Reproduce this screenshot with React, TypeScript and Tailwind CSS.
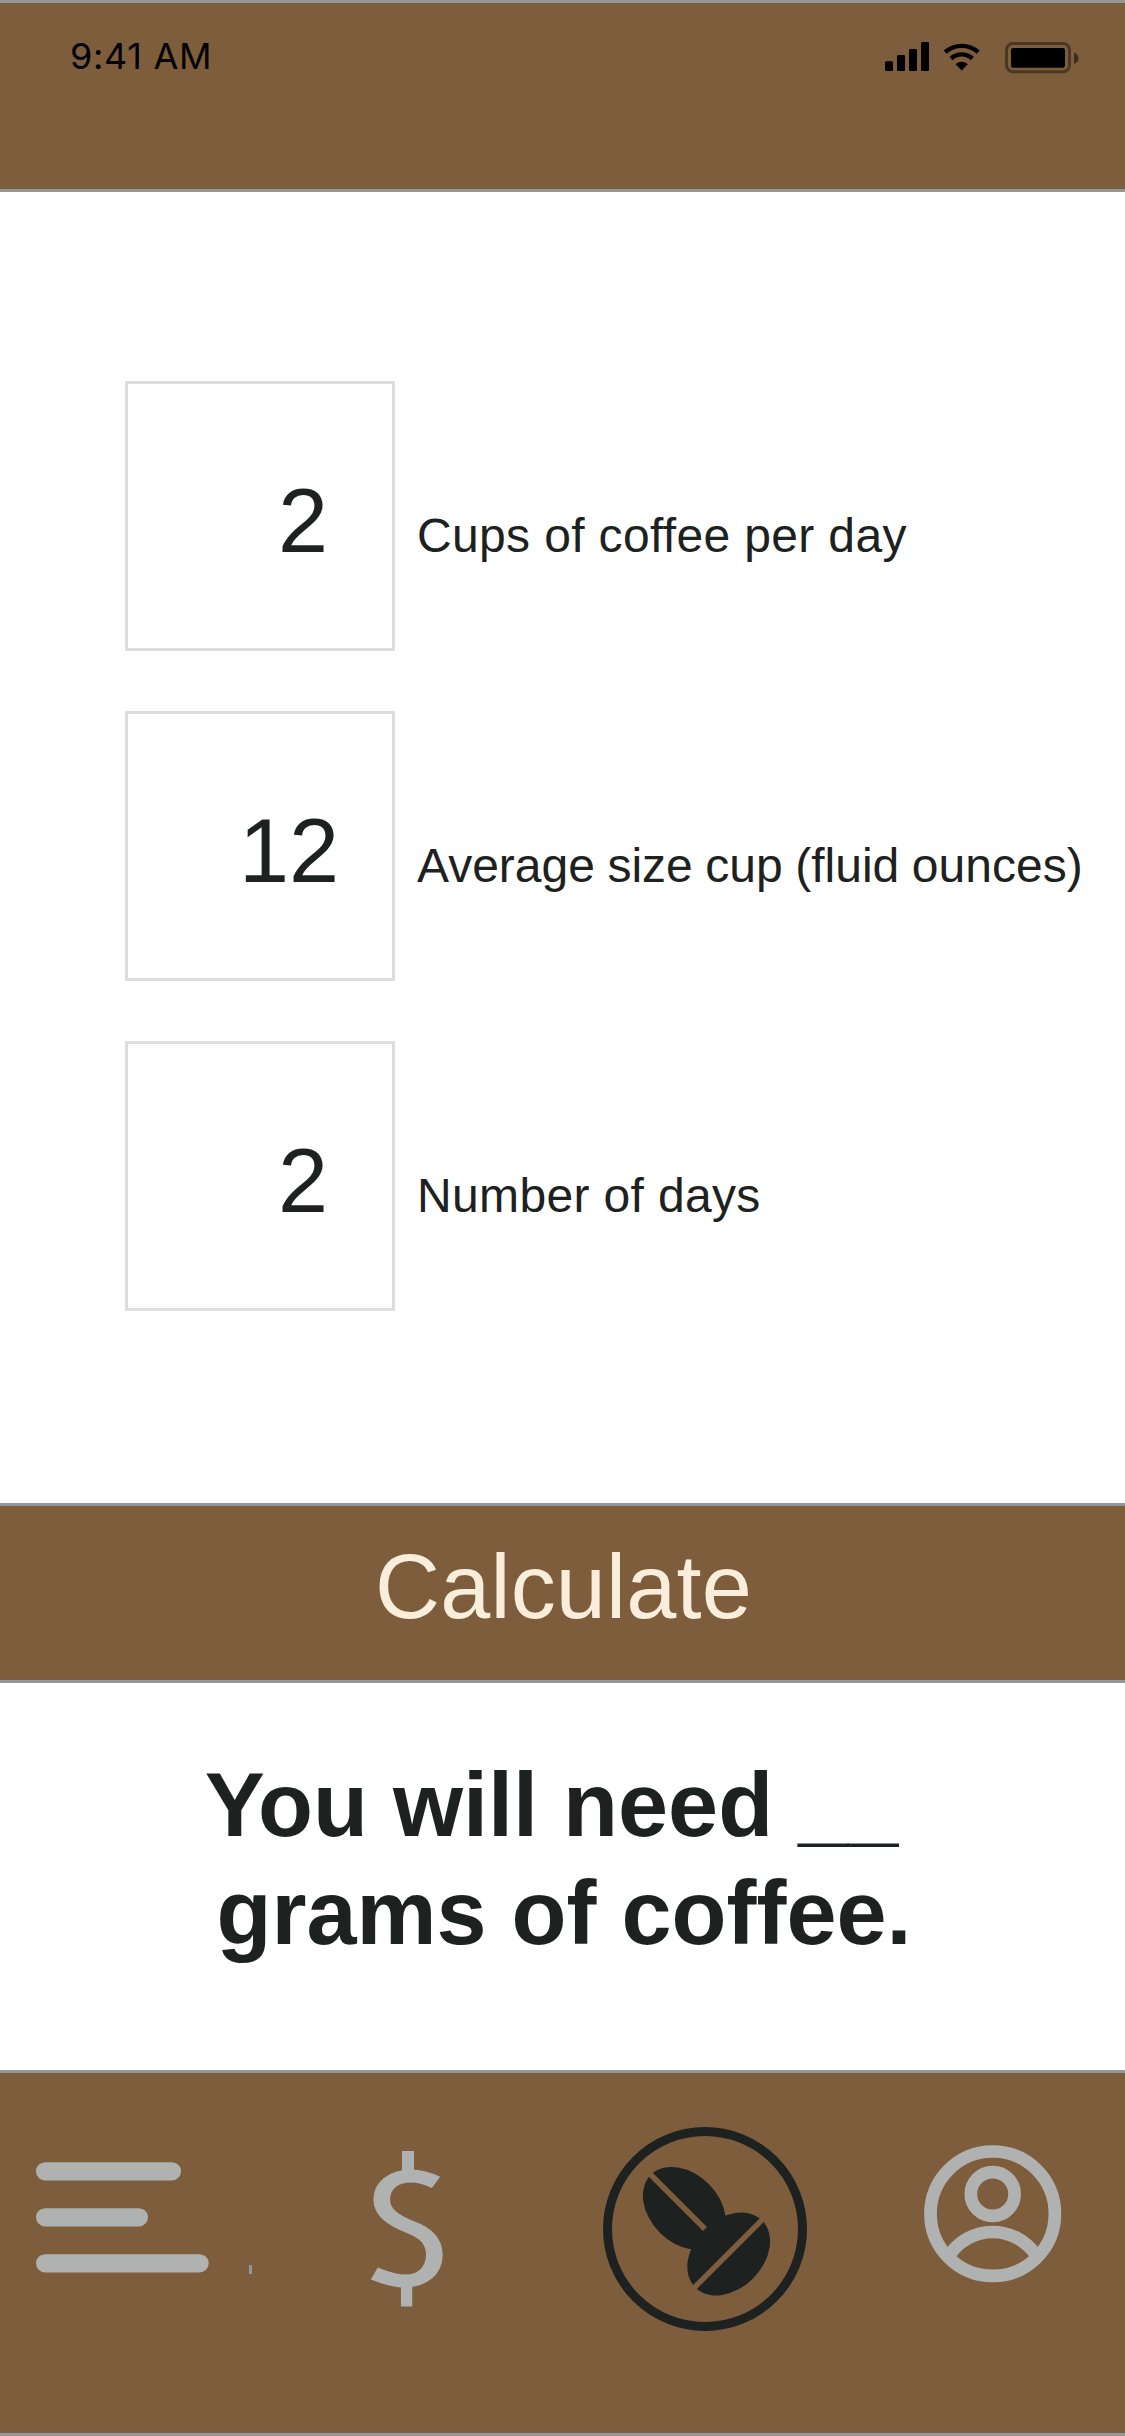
const fields = [
  { id: "cups", value: "2", pad: "pr-[64px]", spacing: "tracking-[0.35px]", label: "Cups of coffee per day" },
  { id: "size", value: "12", pad: "pr-[53px]", spacing: "[word-spacing:-0.8px]", label: "Average size cup (fluid ounces)" },
  { id: "days", value: "2", pad: "pr-[64px]", spacing: "tracking-[0.35px]", label: "Number of days" },
];

function SignalIcon() {
  return (
    <svg className="h-[29px] w-[44px]" viewBox="25 42 44 29">
      <rect x="25" y="61.3" width="8" height="9.7" rx="1.2" />
      <rect x="37" y="55" width="8" height="16" rx="1.2" />
      <rect x="49" y="49" width="8" height="22" rx="1.2" />
      <rect x="61" y="42" width="8" height="29" rx="1.2" />
    </svg>
  );
}

function WifiIcon() {
  return (
    <svg className="ml-[14px] h-[29px] w-[38px]" viewBox="83 42 38 29" fill="none" stroke="#000" strokeWidth="4.4">
      <path d="M85.2 52.2A24.6 24.6 0 0 1 118.2 52.2" />
      <path d="M91.1 58.5A15.8 15.8 0 0 1 112.3 58.5" />
      <path d="M101.7 70.5L95.6 64.2A9 9 0 0 1 107.8 64.2Z" fill="#000" stroke="none" />
    </svg>
  );
}

function BatteryIcon() {
  return (
    <svg className="ml-[24px] h-[32px] w-[74px]" viewBox="145 42 74 32">
      <rect x="146.5" y="43.5" width="63" height="28.3" rx="6.5" fill="none" stroke="#000" strokeOpacity="0.4" strokeWidth="3" />
      <rect x="151" y="48" width="54" height="19.7" rx="2.2" />
      <path d="M214 52.5C220 54.5 220 62 214 64Z" fillOpacity="0.5" />
    </svg>
  );
}

function MenuIcon() {
  return (
    <svg className="mt-[89px] h-[114px] w-[216px]" viewBox="0 0 216 114" fill="#b0b2b1">
      <rect x="0" y="0.2" width="145" height="18.3" rx="9.1" />
      <rect x="0" y="46.2" width="112" height="18.3" rx="9.1" />
      <rect x="0" y="92.2" width="172.7" height="18.3" rx="9.1" />
      <rect x="213" y="103" width="3" height="9" fill="#93969a" />
    </svg>
  );
}

function DollarIcon() {
  return (
    <svg className="ml-[118px] mt-[78px] h-[156px] w-[76px]" viewBox="30 41 76 156" fill="none" stroke="#b0b2b1">
      <path
        transform="scale(1.28 1)"
        strokeWidth="13"
        d="M75 72.3C68 68.3 62 66 55.5 66C41.4 66 32.6 76 32.6 89.5C32.6 103 42.2 110.5 54.7 117C68.8 123.5 73.7 133 73.7 145C73.7 161 64 171 50.8 171C41.5 171 34 166.8 26.8 163.5"
      />
      <path strokeWidth="12" d="M68 41V64" />
      <path strokeWidth="11.3" d="M66.6 172V196.5" />
    </svg>
  );
}

function BeansIcon() {
  return (
    <svg className="ml-[157px] mt-[54px] h-[204px] w-[204px]" viewBox="13 17 204 204">
      <circle cx="115" cy="119" r="97.5" fill="none" stroke="#1d2120" strokeWidth="9" />
      <g fill="#1d2120">
        <ellipse cx="94.3" cy="98.3" rx="47.3" ry="34.5" transform="rotate(45 94.3 98.3)" />
        <ellipse cx="138.7" cy="144" rx="47.3" ry="34.5" transform="rotate(-45 138.7 144)" />
      </g>
      <g stroke="#7e5d3d" strokeWidth="5.4">
        <path d="M58 62L115 119" />
        <path d="M174 108L103 179" />
      </g>
    </svg>
  );
}

function UserIcon() {
  return (
    <svg className="ml-[117px] mt-[72px] h-[138px] w-[138px]" viewBox="24 35 138 138" fill="none" stroke="#b0b2b1" strokeWidth="12.7">
      <circle cx="92.7" cy="103.7" r="62.2" />
      <circle cx="92.7" cy="84" r="21.9" />
      <path d="M50.5 143.6A52 52 0 0 1 134.9 143.6" />
    </svg>
  );
}

export default function App() {
  return (
    <div className="flex h-[2436px] w-[1125px] flex-col overflow-hidden bg-white font-['Liberation_Sans',Arial,sans-serif] text-[#1d2120]">
      <header className="flex h-[192px] shrink-0 items-start border-y-[3px] border-[#939599] bg-[#7e5d3d] pl-[70px]">
        <span className="mt-[31px] w-[815px] font-['Inter',sans-serif] text-[36px] leading-[44px] tracking-[0.7px] text-black">9:41 AM</span>
        <div className="mt-[39px] flex items-start">
          <SignalIcon />
          <WifiIcon />
          <BatteryIcon />
        </div>
      </header>

      <main className="flex h-[1311px] shrink-0 flex-col gap-[60px] pl-[125px] pt-[189px]">
        {fields.map((f) => (
          <div key={f.id} className="flex h-[270px] items-baseline">
            <div className={`flex h-[270px] w-[270px] items-start justify-end border-[3px] border-[#dcdedd] pt-[85px] text-[90px] leading-[104px] ${f.pad}`}>
              {f.value}
            </div>
            <span className={`ml-[22px] whitespace-nowrap text-[48px] ${f.spacing}`}>{f.label}</span>
          </div>
        ))}
      </main>

      <button className="flex h-[180px] shrink-0 justify-center border-y-[3px] border-[#939599] bg-[#7e5d3d] pl-[2px] pt-[29px] text-[90px] leading-[104px] tracking-[0.2px] text-[#f8eedb]">
        Calculate
      </button>

      <section className="h-[387px] shrink-0 pl-[3px] pt-[68px] text-center text-[90px] font-bold leading-[108px]">
        <p>You will need __&nbsp;</p>
        <p>grams of coffee.</p>
      </section>

      <nav className="flex h-[366px] shrink-0 items-start border-y-[3px] border-[#939599] bg-[#7e5d3d] pl-[36px]">
        <MenuIcon />
        <DollarIcon />
        <BeansIcon />
        <UserIcon />
      </nav>
    </div>
  );
}
